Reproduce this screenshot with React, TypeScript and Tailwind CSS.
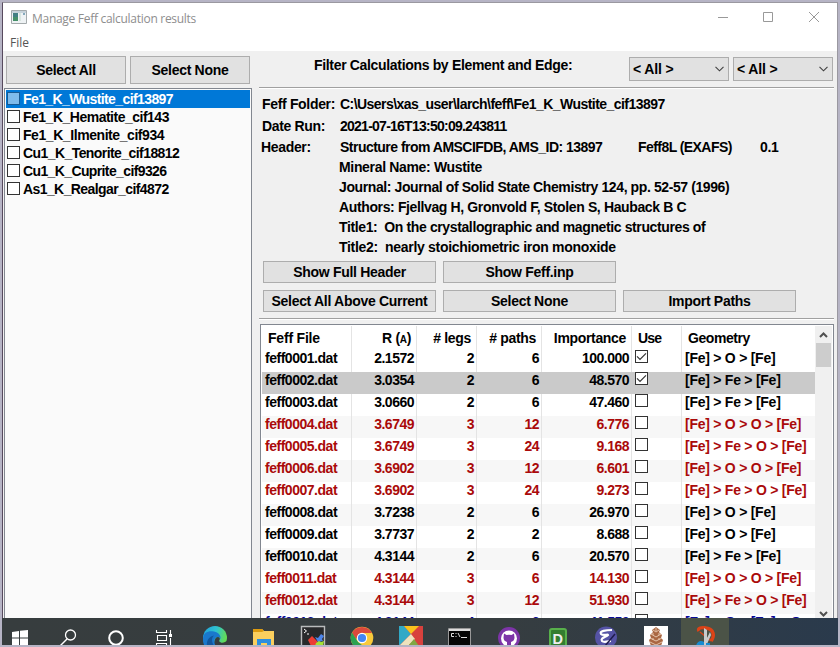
import React from "react";

const files = [
  ["Fe1_K_Wustite_cif13897", "tracking-[-0.6px]"],
  ["Fe1_K_Hematite_cif143", "tracking-[-0.5px]"],
  ["Fe1_K_Ilmenite_cif934", "tracking-[-0.43px]"],
  ["Cu1_K_Tenorite_cif18812", "tracking-[-0.57px]"],
  ["Cu1_K_Cuprite_cif9326", "tracking-[-0.62px]"],
  ["As1_K_Realgar_cif4872", "tracking-[-0.59px]"],
];

type Row = [string, string, string, string, string, string, string];

const rows: Row[] = [
  ["0001", "2.1572", "2", "6", "100.000", "[Fe] > O > [Fe]", "k"],
  ["0002", "3.0354", "2", "6", "48.570", "[Fe] > Fe > [Fe]", "k"],
  ["0003", "3.0660", "2", "6", "47.460", "[Fe] > Fe > [Fe]", "k"],
  ["0004", "3.6749", "3", "12", "6.776", "[Fe] > O > O > [Fe]", "r"],
  ["0005", "3.6749", "3", "24", "9.168", "[Fe] > Fe > O > [Fe]", "r"],
  ["0006", "3.6902", "3", "12", "6.601", "[Fe] > O > O > [Fe]", "r"],
  ["0007", "3.6902", "3", "24", "9.273", "[Fe] > Fe > O > [Fe]", "r"],
  ["0008", "3.7238", "2", "6", "26.970", "[Fe] > O > [Fe]", "k"],
  ["0009", "3.7737", "2", "2", "8.688", "[Fe] > O > [Fe]", "k"],
  ["0010", "4.3144", "2", "6", "20.570", "[Fe] > Fe > [Fe]", "k"],
  ["0011", "4.3144", "3", "6", "14.130", "[Fe] > O > O > [Fe]", "r"],
  ["0012", "4.3144", "3", "12", "51.930", "[Fe] > Fe > O > [Fe]", "r"],
  ["0013", "4.3144", "4", "6", "41.550", "[Fe] > O > [Fe] > O > [Fe]", "b"],
];

const inks: Record<string, string> = {
  k: "text-black",
  r: "text-[#aa0a0a]",
  b: "text-[#0a0a96]",
};

const cols = "grid grid-cols-[90px_65px_60px_65px_90px_50px_133px]";

function Button({ children, className }: { children: React.ReactNode; className: string }) {
  return (
    <button className={`flex shrink-0 items-center justify-center border border-[#adadad] bg-[#e1e1e1] tracking-[-0.3px] ${className}`}>
      {children}
    </button>
  );
}

function Rule() {
  return <div className="h-[2px] w-[575px] shrink-0 border-b border-white bg-[#a0a0a0]" />;
}

function Choice() {
  return (
    <div className="flex h-6 w-[100px] items-center justify-between border border-[#adadad] bg-[#e1e1e1] pr-1 pl-[3px]">
      <span className="tracking-[-0.15px]">{"< All >"}</span>
      <svg width="9" height="6" viewBox="0 0 9 6" fill="none" stroke="#404040" strokeWidth="1.1">
        <path d="M.5 .8 4.5 4.8 8.5 .8" />
      </svg>
    </div>
  );
}

function Line({ label, children, className }: { label?: string; children: React.ReactNode; className: string }) {
  return (
    <div className={`flex h-5 shrink-0 leading-5 ${className}`}>
      {label && <span className="w-[78px] shrink-0">{label}</span>}
      {children}
    </div>
  );
}

function Header() {
  return (
    <div className={`${cols} h-6 shrink-0 leading-6`}>
      <span className="border-r border-[#e4e4e4] pl-[6px] tracking-[-0.2px]">Feff File</span>
      <span className="border-r border-[#e4e4e4] pr-[5px] text-right">
        R (<span className="text-[10px]">A</span>)
      </span>
      <span className="border-r border-[#e4e4e4] pr-[5px] text-right">{"# legs"}</span>
      <span className="border-r border-[#e4e4e4] pr-[5px] text-right">{"# paths"}</span>
      <span className="border-r border-[#e4e4e4] pr-[5px] text-right">Importance</span>
      <span className="border-r border-[#e4e4e4] pl-[6px] tracking-[-0.8px]">Use</span>
      <span className="pl-[6px] tracking-[-0.45px]">Geometry</span>
    </div>
  );
}

function PathRow({ row, index }: { row: Row; index: number }) {
  const bg = index === 1 ? "bg-[#cacaca]" : index % 2 ? "bg-[#f7f7f7]" : "bg-white";
  const edge = index === 1 ? "border-[#cacaca]" : "border-[#e4e4e4]";
  const cell = `h-[22px] border-r ${edge} pr-[2px] text-right tracking-[-0.5px]`;
  return (
    <div className={`${cols} h-[22px] shrink-0 leading-[17px] ${bg} ${inks[row[6]]}`}>
      <span className={`h-[22px] border-r pl-[3px] tracking-[-0.48px] ${edge}`}>feff{row[0]}.dat</span>
      <span className={cell}>{row[1]}</span>
      <span className={cell}>{row[2]}</span>
      <span className={cell}>{row[3]}</span>
      <span className={cell}>{row[4]}</span>
      <span className={`h-[22px] border-r pl-[3px] ${edge}`}>
        <span className="flex h-[13px] w-[13px] items-center justify-center border border-[#333] bg-white">
          {index < 2 && (
            <svg width="11" height="11" viewBox="0 0 11 11" fill="none" stroke="#333" strokeWidth="1.2" className="shrink-0">
              <path d="M1 5.3 4 8.3 10 2.3" />
            </svg>
          )}
        </span>
      </span>
      <span className="overflow-hidden pl-[3px] tracking-[-0.25px] whitespace-nowrap">{row[5]}</span>
    </div>
  );
}

function Taskbar() {
  return (
    <svg width="836" height="27" viewBox="2 618 836 27" className="shrink-0">
      <defs>
        <linearGradient id="bar" x1="0" x2="1">
          <stop offset="0" stopColor="#373d3e" />
          <stop offset="0.6" stopColor="#363d40" />
          <stop offset="1" stopColor="#2a3a4c" />
        </linearGradient>
        <linearGradient id="edge" x1="0" y1="0" x2="1" y2="0.3">
          <stop offset="0" stopColor="#219fdc" />
          <stop offset="0.55" stopColor="#2fc3d0" />
          <stop offset="1" stopColor="#62dc55" />
        </linearGradient>
      </defs>
      <path d="M2 618H838V645H2Z" fill="url(#bar)" />
      <path d="M12 632 19 631V637.5H12ZM20 630.8 28 630V637.5H20ZM12 638.5H19V645H12ZM20 638.5H28V646H20Z" fill="#fff" />
      <g fill="none" stroke="#fff">
        <circle cx="70.5" cy="635" r="5" strokeWidth="1.3" />
        <path d="M67 639 60.5 645.5" strokeWidth="1.4" />
        <circle cx="116" cy="638" r="6.8" strokeWidth="2" />
        <path d="M156.5 630V632.5H166.5V630M157.5 635.5H166.5V640.5H157.5ZM156.5 646V643.5H166.5V646M170.5 630V634M170.5 638V645" strokeWidth="1.1" />
      </g>
      <path d="M169 634H172V637H169Z" fill="#fff" />

      <circle cx="215" cy="638" r="12" fill="url(#edge)" />
      <path d="M203 639C203 632 209 630.500 214 631.500C219 632.500 221 636 220.500 639C219 635.500 214 637 214.500 641L217 650H208C204 647 203 643 203 639Z" fill="#1a78cc" />
      <path d="M208 650C205 643 208 636.500 214 635.500C211 638 211.500 643 215 647Z" fill="#13569c" />
      <path d="M215.500 646C213 641 215.500 637 218 637C221 637.500 219.500 640 219 641C221 644 225 643 227.500 640V646Z" fill="#373d3e" />

      <path d="M253 629H262L264 631H274V646H253Z" fill="#fbcf5e" />
      <path d="M253 629H262L264 631L262 632H253Z" fill="#dd9b10" />
      <path d="M257 646V639H271V646H267V643H261V646Z" fill="#2e8ede" />

      <path d="M301.5 626.5H324.5V646H301.5Z" fill="#28292b" stroke="#b9bbbc" strokeWidth="1.4" />
      <path d="M304 629 306.500 631 304 633M307 634H309" fill="none" stroke="#fff" />
      <path d="M308 640 312 636 316 640 319 643 317 646H311Z" fill="#ed3c34" />
      <path d="M315 637 318 638 321 634 324 636 322 639 323 641 318 642Z" fill="#4d84e8" />
      <path d="M316 643 319 641 321 642 324 641 323 646H315Z" fill="#a4e034" />

      <circle cx="362" cy="638" r="11.300" fill="#f9c93b" />
      <path d="M352 633A11.300 11.300 0 0 1 372 633H362L356 639Z" fill="#db493c" />
      <path d="M352 632.500 358 642 362 645V648L354 646A11.300 11.300 0 0 1 352 632.500Z" fill="#2ba152" />
      <circle cx="362" cy="638" r="5.200" fill="#fff" />
      <circle cx="362" cy="638" r="4.100" fill="#4285f4" />

      <path d="M399 626H423V646H399Z" fill="#d8413d" />
      <path d="M399 626H404L411 634 399 646Z" fill="#31a9c6" />
      <path d="M404 626H419L411 634Z" fill="#fac21d" />
      <path d="M399 646 411 634 415 639 408 646Z" fill="#eee2bd" />
      <path d="M408 646 414 639 419 646Z" fill="#81a842" />

      <path d="M448.500 628.500H470.500V646H448.500Z" fill="#050505" stroke="#999" />
      <path d="M449 629H470V631H449Z" fill="#ddd" />
      <path d="M454 633.500H451.500V636.500H454M456 633V634M456 636V637M458 633 460 637M461 637.500H467" fill="none" stroke="#ddd" />

      <circle cx="509" cy="638" r="11" fill="#7d34a8" />
      <circle cx="509" cy="638.500" r="8" fill="#fff" />
      <path d="M504 633.500 506.500 635Q509 634.300 511.500 635L514 633.500L514.500 637.500Q514.500 641 511 642V646H507V642Q503.500 641 503.500 637.500Z" fill="#7d34a8" />

      <rect x="549" y="628" width="18" height="21" rx="3" fill="#58b04b" />
      <rect x="551" y="630" width="14" height="18" rx="1" fill="#347d30" />
      <text x="552.500" y="643.500" fontSize="14.500" fontWeight="700" fontFamily="Liberation Sans" fill="#eee">D</text>

      <circle cx="606" cy="637.500" r="11" fill="#5553a5" />
      <path d="M612 630C606 630 599 631 601 634C603 636 608 634 608 635C606 637 600 638 602 641C604 643 609 641 611 641" fill="none" stroke="#fff" strokeWidth="2.200" />
      <path d="M615 634 605 646" stroke="#201c4d" strokeWidth="1.500" />

      <path d="M644 626H668V646H644Z" fill="#fff" />
      <path d="M656 627 660 630 659 632 662 635 661 638 663 640 661 646H651L649 640 651 638 650 635 653 632 652 630Z" fill="#aa6742" />
      <path d="M653 630 656 632 659 630M651 634 656 637 661 634M650 638 656 641 662 638M650 642 656 645 662 642M656 628V631M653 633V635M659 633V635M653 638V640M659 638V640" fill="none" stroke="#ebcdb5" strokeWidth=".9" />

      <path d="M681 618H729V645H681Z" fill="#4b5347" />
      <path d="M699 631C697 628 702 627 706 628C714 629 715 636 711 641" fill="none" stroke="#dc4317" strokeWidth="3.400" />
      <path d="M700 632 711 641" stroke="#dc4317" strokeWidth="1.500" />
      <path d="M704 628 707 630V646H704ZM710 632 711 635 707 644 705 642Z" fill="#c9cccd" />
      <path d="M696 646C697 641 701 640 704 642V646ZM706 643 710 643 710 646H706Z" fill="#168cd2" />
    </svg>
  );
}

export default function App() {
  return (
    <div className="flex h-[647px] w-[840px] flex-col overflow-hidden bg-[#b6b4c5] pt-[2px] pl-[2px] font-['Liberation_Sans',Arial,sans-serif] text-[14px] font-bold tracking-[-0.33px] whitespace-pre text-black">
      <div className="flex h-[616px] w-[836px] shrink-0 flex-col overflow-hidden border-x border-t border-[#9a98a0] border-l-[#574a5e] bg-[#f0f0f0]">
        <div className="flex h-[48px] shrink-0 flex-col bg-white font-['Open_Sans','Noto_Sans',sans-serif] text-[12px] font-normal">
          <div className="flex h-[30px] items-center pl-[8px] text-[#8e8e8e]">
            <svg width="16" height="14" viewBox="0 0 16 14" className="-mt-[3px]">
              <path d="M.5 .5H15.500V13.500H.5Z" fill="#eef2f4" stroke="#a4aaac" />
              <path d="M1 1H15V3H1Z" fill="#c6d2da" />
              <path d="M2 3H7V11H2Z" fill="#427f83" />
              <path d="M2 7H7V11H2Z" fill="#469069" />
              <path d="M8 3H10V11H8Z" fill="#d7e5df" />
              <path d="M12 3H14V5H12Z" fill="#84a9bc" />
            </svg>
            <span className="mt-px ml-[5px] tracking-[-0.29px]">Manage Feff calculation results</span>
            <svg width="102" height="12" viewBox="0 0 102 12" fill="none" stroke="#999" className="-mt-[2px] mr-[17px] ml-auto">
              <path d="M0 6.500H10M45.500 1.500H54.500V10.500H45.500ZM91 1 101 11M101 1 91 11" />
            </svg>
          </div>
          <div className="pt-[2px] pl-[7px] leading-[16px] tracking-normal text-[#555]">File</div>
        </div>

        <div className="flex min-h-0 flex-1">
          <div className="flex w-[250px] shrink-0 flex-col pt-[5px] pl-px">
            <div className="flex gap-1 pl-[2px]">
              <Button className="h-7 w-[120px]">Select All</Button>
              <Button className="h-7 w-[120px]">Select None</Button>
            </div>
            <div className="mt-[4px] flex w-[248px] flex-1 flex-col border border-b-0 border-[#828790] bg-[#fafafa] px-px pt-px">
              {files.map(([name, track], i) => (
                <div key={name} className={`flex h-[18px] shrink-0 pl-px leading-[18px] ${i === 0 ? "bg-[#0078d7] text-white" : ""}`}>
                  <span className={`mt-[2px] mr-[3px] h-[13px] w-[13px] border ${i === 0 ? "border-[#1a5a91] bg-[#7fbbeb]" : "border-[#333] bg-white"}`} />
                  <span className={track}>{name}</span>
                </div>
              ))}
            </div>
          </div>

          <div className="flex flex-1 flex-col pl-[6px]">
            <div className="flex h-[36px] shrink-0 pt-[6px]">
              <span className="ml-[55px] w-[315px] leading-[16px]">Filter Calculations by Element and Edge:</span>
              <div className="flex gap-1">
                <Choice />
                <Choice />
              </div>
            </div>
            <Rule />
            <Line label="Feff Folder:" className="mt-[5px] pl-[3px]">
              <span className="tracking-[-0.54px]">{"C:\\Users\\xas_user\\larch\\feff\\Fe1_K_Wustite_cif13897"}</span>
            </Line>
            <Line label="Date Run:" className="mt-[2px] pl-[3px]">
              <span className="tracking-[-0.75px]">2021-07-16T13:50:09.243811</span>
            </Line>
            <Line label="Header:" className="mt-px pl-[2px]">
              <span className="w-[298px] pl-px tracking-[-0.52px]">Structure from AMSCIFDB, AMS_ID: 13897</span>
              <span className="w-[123px] pl-px tracking-[-0.56px]">Feff8L (EXAFS)</span>
              <span>0.1</span>
            </Line>
            <Line className="pl-[80px]">Mineral Name: Wustite</Line>
            <Line className="pl-[80px] tracking-[-0.4px]">Journal: Journal of Solid State Chemistry 124, pp. 52-57 (1996)</Line>
            <Line className="pl-[80px] tracking-[-0.37px]">Authors: Fjellvag H, Gronvold F, Stolen S, Hauback B C</Line>
            <Line className="pl-[80px] tracking-[-0.38px]">{"Title1:  On the crystallographic and magnetic structures of"}</Line>
            <Line className="pl-[80px] tracking-[-0.3px]">{"Title2:  nearly stoichiometric iron monoxide"}</Line>
            <div className="mt-[4px] grid w-fit grid-cols-3 gap-x-[7px] gap-y-[7px] pl-[4px]">
              <Button className="h-[22px] w-[173px]">Show Full Header</Button>
              <Button className="h-[22px] w-[173px]">Show Feff.inp</Button>
              <span />
              <Button className="h-[22px] w-[173px]">Select All Above Current</Button>
              <Button className="h-[22px] w-[173px]">Select None</Button>
              <Button className="h-[22px] w-[173px]">Import Paths</Button>
            </div>
            <div className="mt-[6px] flex">
              <Rule />
            </div>
            <div className="mt-[4px] ml-px flex h-[320px] w-[574px] shrink-0 border border-[#828790] bg-white p-px">
              <div className="flex w-[553px] shrink-0 flex-col">
                <Header />
                {rows.map((row, i) => (
                  <PathRow key={row[0]} row={row} index={i} />
                ))}
              </div>
              <div className="flex w-[17px] flex-col items-center bg-[#f0f0f0]">
                <svg width="9" height="6" viewBox="0 0 9 6" fill="none" stroke="#505050" strokeWidth="2" className="mt-[6px] shrink-0">
                  <path d="M1 5 4.500 1.500 8 5" />
                </svg>
                <div className="mt-[5px] h-6 w-[15px] shrink-0 bg-[#cdcdcd]" />
                <svg width="9" height="6" viewBox="0 0 9 6" fill="none" stroke="#505050" strokeWidth="2" className="mt-[244px] shrink-0">
                  <path d="M1 1 4.500 4.500 8 1" />
                </svg>
              </div>
            </div>
          </div>
        </div>
      </div>
      <Taskbar />
    </div>
  );
}
